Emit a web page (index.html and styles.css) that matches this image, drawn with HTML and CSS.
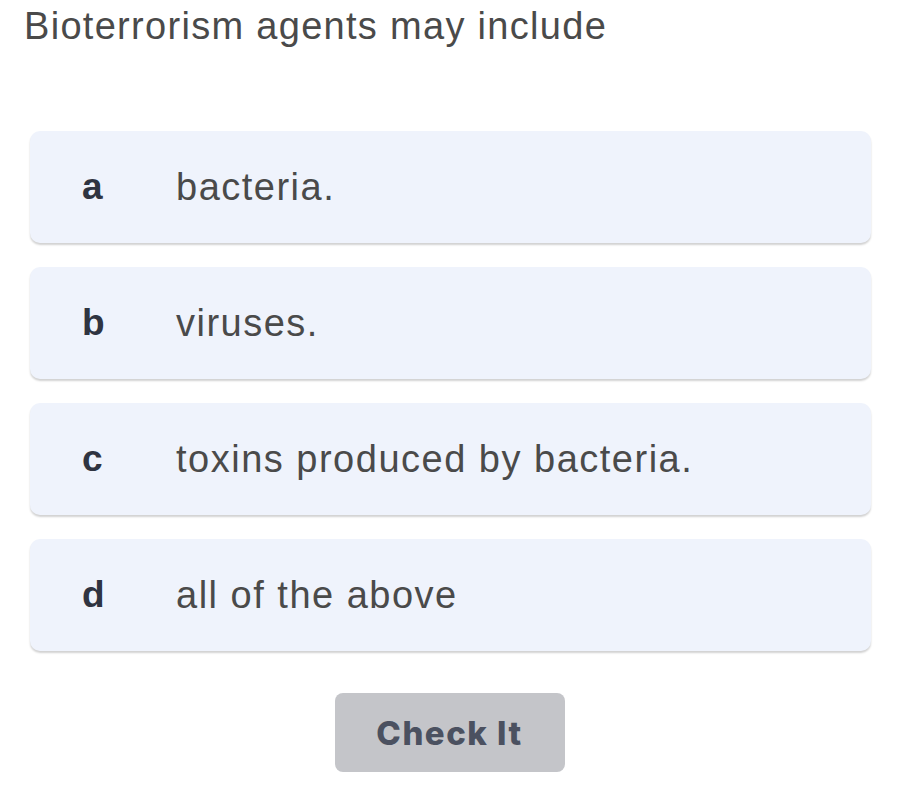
FILE: index.html
```html
<!DOCTYPE html>
<html lang="en">
<head>
    <meta charset="UTF-8">
    <meta name="viewport" content="width=device-width, initial-scale=1.0">
    <title>Quiz</title>
    <link rel="stylesheet" href="styles.css">
</head>
<body>

    <!-- Question -->
    <h1 class="question">Bioterrorism agents may include</h1>

    <!-- Answer options -->
    <div class="options">
        <div class="option">
            <span class="option__letter">a</span>
            <span class="option__text">bacteria.</span>
        </div>
        <div class="option">
            <span class="option__letter">b</span>
            <span class="option__text">viruses.</span>
        </div>
        <div class="option">
            <span class="option__letter">c</span>
            <span class="option__text">toxins produced by bacteria.</span>
        </div>
        <div class="option">
            <span class="option__letter">d</span>
            <span class="option__text">all of the above</span>
        </div>
    </div>

    <div class="actions">
        <button class="check-btn">Check It</button>
    </div>

</body>
</html>
```

FILE: styles.css
```css
body {
    background-color: #ffffff;
    color: #4a4a4a;
    font-family: 'Liberation Sans', Arial, sans-serif;
    margin: 0;
    padding: 0;
}

.question {
    margin: 0;
    padding: 3px 0 0 24px;
    font-size: 38px;
    font-weight: 400;
    line-height: 46px;
    letter-spacing: 1.3px;
    color: #4a4a4a;
}

/* Options */
.options {
    display: flex;
    flex-direction: column;
    gap: 24px;
    margin: 82px 28px 0 30px;
}

.option {
    display: flex;
    align-items: center;
    height: 112px;
    background-color: #eff3fc;
    border-radius: 10px;
    box-shadow: 0 2px 2px rgba(0, 0, 0, 0.18);
    box-sizing: border-box;
    padding-left: 52px;
}

.option__letter {
    width: 94px;
    font-weight: 700;
    font-size: 37px;
    letter-spacing: 1px;
    color: #2f3441;
}

.option__text {
    font-size: 38px;
    letter-spacing: 1.5px;
    color: #4a4a4a;
}

/* Button */
.actions {
    display: flex;
    justify-content: center;
    margin-top: 42px;
}

.check-btn {
    width: 230px;
    height: 79px;
    border: none;
    border-radius: 8px;
    background-color: #c4c5c9;
    color: #4b5160;
    font-family: Inter, 'Liberation Sans', sans-serif;
    font-weight: 800;
    font-size: 33px;
    letter-spacing: 1.5px;
    cursor: pointer;
}
```
